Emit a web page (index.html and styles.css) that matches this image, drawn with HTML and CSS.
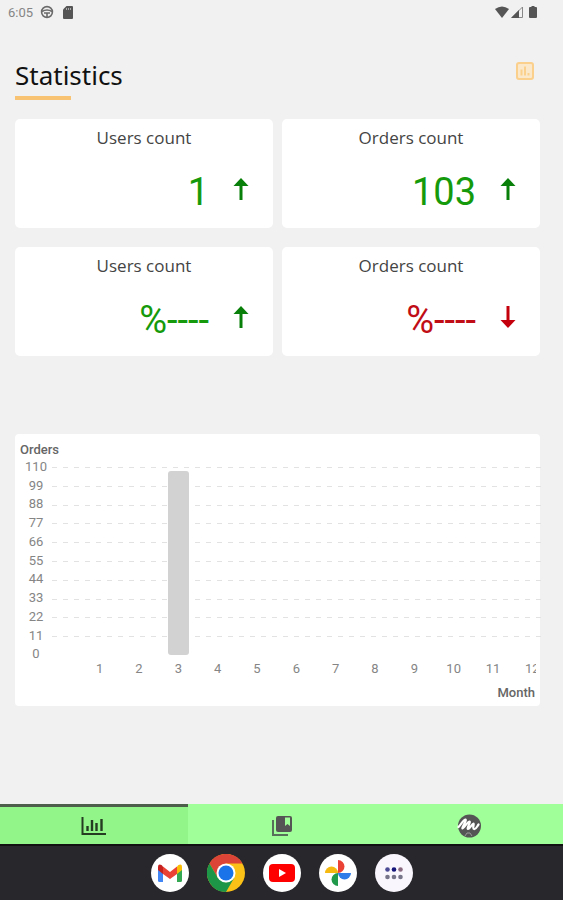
FILE: index.html
```html
<!DOCTYPE html>
<html lang="en">
<head>
    <meta charset="UTF-8">
    <meta name="viewport" content="width=device-width, initial-scale=1.0">
    <title>Statistics</title>
    <link rel="stylesheet" href="styles.css">
</head>
<body>
<div class="status-bar">
    <span class="status-time">6:05</span>
    <svg width="14" height="14" viewBox="0 0 14 14" fill="none" stroke="#6b6b6b" stroke-width="1.6">
        <circle cx="7" cy="7" r="5.4"/>
        <path d="M2 6.5Q7 3.5 12 6.5M4 8h6M7 8v4"/>
    </svg>
    <svg class="status-card" width="10" height="13" viewBox="0 0 10 13">
        <path d="M3.5 0H9q1 0 1 1v11q0 1-1 1H1q-1 0-1-1V3.5z" fill="#555"/>
        <path d="M3.5 2v2M5.5 2v2M7.5 2v2" stroke="#aaa"/>
    </svg>
    <div class="status-right">
        <svg width="14" height="12" viewBox="0 0 14 12"><path d="M0 3Q7-2 14 3L7 12z" fill="#555"/></svg>
        <svg width="12" height="12" viewBox="0 0 12 12">
            <path d="M11.5 1v10.5H1z" fill="none" stroke="#888"/>
            <path d="M8 4v8H0z" fill="#555"/>
        </svg>
        <svg class="status-battery" width="8" height="12" viewBox="0 0 8 12"><path d="M2.5 0h3v1H7q1 0 1 1v9q0 1-1 1H1q-1 0-1-1V2q0-1 1-1h1.500z" fill="#555"/></svg>
    </div>
</div>

<main class="content">
    <div class="header">
        <h1>Statistics</h1>
        <svg width="18" height="18" viewBox="0 0 18 18">
            <rect x="1" y="1" width="16" height="16" rx="2" fill="#fbe8cb" stroke="#fbcf8c" stroke-width="2"/>
            <path d="M5.500 7.500v6M9 4.500v9M12.500 11v2.500" stroke="#fbcf8c" stroke-width="2"/>
        </svg>
    </div>

    <div class="cards">
        <div class="card">
            <h2>Users count</h2>
            <div class="card-value up">
                <span>1</span>
                <svg width="16" height="22" viewBox="0 0 16 22"><path d="M8 0l7.500 8h-6v14h-3V8h-6z"/></svg>
            </div>
        </div>
        <div class="card">
            <h2>Orders count</h2>
            <div class="card-value up">
                <span>103</span>
                <svg width="16" height="22" viewBox="0 0 16 22"><path d="M8 0l7.500 8h-6v14h-3V8h-6z"/></svg>
            </div>
        </div>
        <div class="card">
            <h2>Users count</h2>
            <div class="card-value up">
                <span>%----</span>
                <svg width="16" height="22" viewBox="0 0 16 22"><path d="M8 0l7.500 8h-6v14h-3V8h-6z"/></svg>
            </div>
        </div>
        <div class="card">
            <h2>Orders count</h2>
            <div class="card-value down">
                <span>%----</span>
                <svg width="16" height="22" viewBox="0 0 16 22"><path d="M8 22l7.500-8h-6V0h-3v14h-6z"/></svg>
            </div>
        </div>
    </div>

    <div class="chart">
        <div class="chart-title">Orders</div>
        <div class="chart-body">
            <div class="y-axis">
                <span>110</span><span>99</span><span>88</span><span>77</span><span>66</span><span>55</span><span>44</span><span>33</span><span>22</span><span>11</span><span>0</span>
            </div>
            <div class="plot">
                <div class="grid-lines">
                    <i></i><i></i><i></i><i></i><i></i><i></i><i></i><i></i><i></i><i></i>
                </div>
                <div class="bars">
                    <div class="bar month-3" style="height: 98%"></div>
                </div>
            </div>
        </div>
        <div class="x-axis">
            <div class="months">
                <span>1</span><span>2</span><span>3</span><span>4</span><span>5</span><span>6</span><span>7</span><span>8</span><span>9</span><span>10</span><span>11</span><span>12</span>
            </div>
        </div>
        <div class="chart-title chart-month">Month</div>
    </div>
</main>

<nav class="tabs">
    <a href="#" class="tab active" aria-label="Statistics">
        <svg width="25" height="20" viewBox="0 0 25 20" fill="none" stroke="#263c22">
            <path d="M1.500 1v17H25" stroke-width="2"/>
            <path d="M6.500 10v5M11 4v11M15.500 7v8M20.500 3v12" stroke-width="2.400"/>
        </svg>
    </a>
    <a href="#" class="tab" aria-label="Orders">
        <svg width="20" height="20" viewBox="0 0 20 20">
            <path d="M1 4v15h15" fill="none" stroke="#56705a" stroke-width="2"/>
            <path d="M6 0h12q2 0 2 2v12q0 2-2 2H6q-2 0-2-2V2q0-2 2-2z" fill="#555"/>
            <path d="M13 1.500h5V10l-2.500-2L13 10z" fill="#a0ff98"/>
        </svg>
    </a>
    <a href="#" class="tab" aria-label="Profile">
        <svg width="24" height="24" viewBox="0 0 24 24" fill="none">
            <circle cx="12.500" cy="12" r="11.500" fill="#555"/>
            <path d="M1.500 13C5 9 7 5 8.500 5.500S4.500 14 5.500 14.500 11 7 12.500 7.500 9.500 14.500 11 15 15.500 9 16.500 9.500 15 14.500 17 15 20 12.500 21.500 10.500" stroke="#fff" stroke-width="2.200" stroke-linecap="round"/>
            <path d="M8 22l2-3h3l2 3" stroke="#999"/>
        </svg>
    </a>
</nav>

<footer class="dock">
    <a href="#" aria-label="Gmail">
        <svg width="38" height="38" viewBox="0 0 38 38">
            <circle cx="19" cy="19" r="19" fill="#fff"/>
            <path d="M7 15l5 4v9H8.500Q7 28 7 26.500z" fill="#4285f4"/>
            <path d="M31 15l-5 4v9h3.500q1.500 0 1.500-1.500z" fill="#34a853"/>
            <path d="M26 12.500l1.500-1.500q3.500-1.500 3.500 2V16l-5 4z" fill="#fbbc04"/>
            <path d="M12 12.500l7 5.500 7-5.500V20l-7 5-7-5z" fill="#ea4335"/>
            <path d="M7 16v-3q0-3.500 3.500-2l1.500 1.500V20z" fill="#c5221f"/>
        </svg>
    </a>
    <a href="#" aria-label="Chrome">
        <svg width="38" height="38" viewBox="0 0 38 38">
            <circle cx="19" cy="19" r="19" fill="#fbc116"/>
            <path d="M2.500 9.500A19 19 0 0 1 35.500 9.500H19L10.800 23.800z" fill="#db4437"/>
            <path d="M2.500 9.500A19 19 0 0 0 19 38L27.200 23.700 19 28.500 10.800 23.700z" fill="#1e9648"/>
            <circle cx="19" cy="19" r="9.500" fill="#fff"/>
            <circle cx="19" cy="19" r="7.500" fill="#1a73e8"/>
        </svg>
    </a>
    <a href="#" aria-label="YouTube">
        <svg width="38" height="38" viewBox="0 0 38 38">
            <circle cx="19" cy="19" r="19" fill="#fff"/>
            <rect x="6" y="10" width="26" height="18" rx="4" fill="#f00"/>
            <path d="M16 15l7 4-7 4z" fill="#fff"/>
        </svg>
    </a>
    <a href="#" aria-label="Photos">
        <svg width="38" height="38" viewBox="0 0 38 38">
            <circle cx="19" cy="19" r="19" fill="#fff"/>
            <path d="M19 6a6.500 6.500 0 0 1 0 13z" fill="#ea4335"/>
            <path d="M32 19a6.500 6.500 0 0 1-13 0z" fill="#2f7de9"/>
            <path d="M19 32a6.500 6.500 0 0 1 0-13z" fill="#219a4b"/>
            <path d="M6 19a6.500 6.500 0 0 1 13 0z" fill="#f5b90f"/>
        </svg>
    </a>
    <a href="#" aria-label="All apps">
        <svg width="38" height="38" viewBox="0 0 38 38">
            <circle cx="19" cy="19" r="19" fill="#faf6fd"/>
            <g fill="#77758a">
                <circle cx="12.500" cy="15.500" r="2.300" fill="#4b4a94"/>
                <circle cx="19" cy="15.500" r="2.300" fill="#15157a"/>
                <circle cx="25.500" cy="15.500" r="2.300" fill="#8a6a80"/>
                <circle cx="12.500" cy="23" r="2.300"/>
                <circle cx="19" cy="23" r="2.300"/>
                <circle cx="25.500" cy="23" r="2.300"/>
            </g>
        </svg>
    </a>
</footer>
</body>
</html>
```
FILE: styles.css
```css
* {
    box-sizing: border-box;
}

body {
    font-family: Roboto, "Liberation Sans", sans-serif;
    margin: 0;
    min-height: 100vh;
    display: flex;
    flex-direction: column;
    background-color: #f1f1f1;
}

svg {
    display: block;
}

.status-bar {
    display: flex;
    align-items: center;
    height: 24px;
    padding: 0 26px 0 8px;
}

.status-time {
    font-size: 13px;
    color: #858585;
    width: 32px;
}

.status-card {
    margin-left: 9px;
}

.status-right {
    display: flex;
    gap: 2px;
    margin-left: auto;
}

.status-battery {
    margin-left: 4px;
}

.content {
    flex: 1;
    padding: 34px 23px 0 15px;
}

.header {
    display: flex;
    justify-content: space-between;
    padding: 4px 6px 0 0;
    margin-bottom: 19px;
}

.header h1 {
    margin: 0;
    font-family: "Noto Sans", sans-serif;
    font-size: 26px;
    font-weight: 400;
    line-height: 26px;
    color: #111;
}

.header h1::after {
    content: "";
    display: block;
    width: 56px;
    height: 4px;
    margin-top: 8px;
    background-color: #f8c373;
}

.cards {
    display: grid;
    grid-template-columns: 1fr 1fr;
    gap: 19px 9px;
}

.card {
    height: 109px;
    padding-top: 8px;
    border-radius: 5px;
    background-color: #fff;
}

.card h2 {
    margin: 0;
    font-family: "Open Sans", sans-serif;
    font-size: 17px;
    font-weight: 400;
    line-height: 22px;
    text-align: center;
    color: #444;
}

.card-value {
    display: flex;
    justify-content: flex-end;
    gap: 24px;
    margin-top: 20px;
    padding-right: 24px;
    font-size: 38px;
    line-height: 46px;
}

.card-value svg {
    margin-top: 9px;
}

.up {
    color: #159a0c;
    fill: #087f08;
}

.down {
    color: #c00d16;
    fill: #c4000d;
}

.chart {
    margin-top: 78px;
    padding: 8px 5px 5px;
    border-radius: 4px;
    background-color: #fff;
    font-size: 13px;
    color: #858585;
}

.chart-title {
    font-weight: 500;
    line-height: 16px;
    color: #666;
}

.chart-body {
    display: flex;
    height: 206px;
}

.y-axis {
    display: grid;
    grid-template-rows: repeat(11, 1fr);
    width: 32px;
    text-align: center;
    line-height: 18px;
}

/* grid lines run a little past the card */
.plot {
    flex: 1;
    display: grid;
    margin-right: -9px;
    padding: 9px 0;
}

.grid-lines,
.bars {
    grid-area: 1 / 1;
}

.grid-lines {
    display: grid;
    grid-template-rows: repeat(10, 1fr);
}

.grid-lines i {
    height: 1px;
    background: repeating-linear-gradient(to right, #e2e2e2 0, #e2e2e2 5px, transparent 5px, transparent 11px);
}

/* the last month is wider than the card and gets cut off */
.bars,
.months {
    display: grid;
    grid-template-columns: repeat(12, 1fr);
    padding-left: 28px;
}

.bars {
    margin-right: -8px;
}

.bar {
    align-self: end;
    justify-self: center;
    width: 21px;
    border-radius: 3px;
    background-color: #d2d2d2;
}

.month-3 {
    grid-column: 3;
}

.x-axis {
    margin: -3px -1px 0 32px;
    overflow: hidden;
}

.months {
    margin-right: -16px;
    line-height: 16px;
    text-align: center;
}

.chart-month {
    margin-top: 8px;
    text-align: right;
}

.tabs {
    display: flex;
    height: 40px;
    background-color: #a0ff98;
}

.tab {
    flex: 1;
    display: flex;
    align-items: center;
    justify-content: center;
    padding-top: 3px;
}

.active {
    padding-top: 0;
    border-top: 3px solid #4d5f4b;
    background-color: #92f58a;
}

.dock {
    display: flex;
    justify-content: center;
    align-items: center;
    gap: 18px;
    height: 56px;
    border-top: 2px solid #111;
    background-color: #28272c;
}
```
